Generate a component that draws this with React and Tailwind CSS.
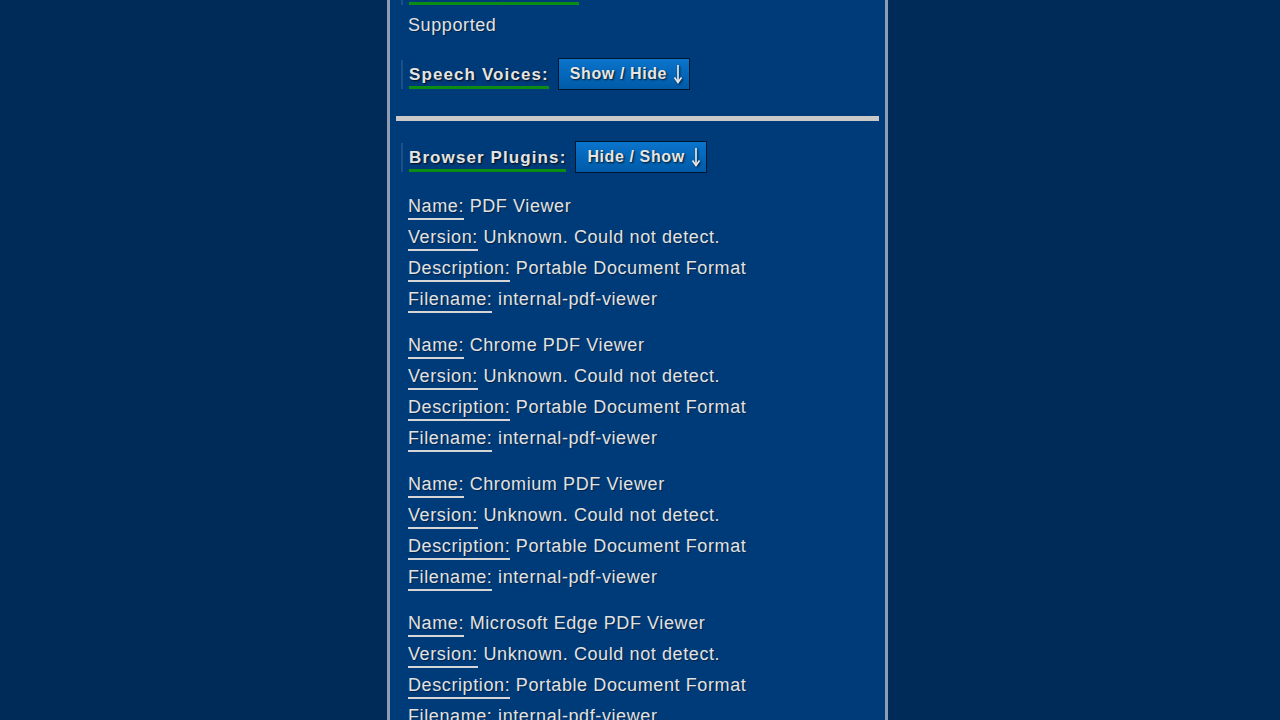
import React from "react";

const plugins = [
  "PDF Viewer",
  "Chrome PDF Viewer",
  "Chromium PDF Viewer",
  "Microsoft Edge PDF Viewer",
  "WebKit built-in PDF",
];

function Arrow() {
  return (
    <svg width="10" height="20" viewBox="0 0 10 20" className="ml-[6px] [filter:drop-shadow(1px_1px_1px_rgba(0,0,0,0.7))]">
      <line x1="5" y1="1" x2="5" y2="18.5" stroke="#e6e6e6" strokeWidth="1.7" />
      <polyline points="1.5,13.5 5,18.5 8.5,13.5" fill="none" stroke="#e6e6e6" strokeWidth="1.7" />
    </svg>
  );
}

function HeadingRow({ title, button, withButton = true }) {
  return (
    <div className="flex items-center gap-[9px] ml-[11px]">
      <div className="border-l-2 border-[#1d5089] pl-[6px] pt-[4px]">
        <span className="block font-bold text-[17px] leading-[22px] tracking-[1.1px] text-[#e4e4e4] border-b-[3px] border-[#0b8c12] [text-shadow:1px_1px_2px_rgba(0,0,0,0.85)]">
          {title}
        </span>
      </div>
      {withButton && (
        <button className="w-[132px] h-[32px] flex items-center justify-start pl-[11px] border border-[#01152c] bg-gradient-to-b from-[#0b74cc] to-[#005ba9] font-bold text-[16px] tracking-[0.6px] text-[#e6e6e6] [text-shadow:1px_1px_2px_rgba(0,0,0,0.85)]">
          <span>{button}</span>
          <Arrow />
        </button>
      )}
    </div>
  );
}

function Field({ label, value }) {
  return (
    <div className="h-[31px] leading-[31px] whitespace-nowrap">
      <span className="inline-block leading-[24px] border-b-2 border-[#d6d6d6]">{label}</span>{" "}
      <span>{value}</span>
    </div>
  );
}

export default function App() {
  return (
    <div className="w-full h-[720px] overflow-hidden bg-[#002a57] [font-family:'Liberation_Sans',Arial,sans-serif]">
      <div className="ml-[387px] w-[501px] h-[720px] border-x-[3px] border-[#8e9cb4] bg-[#003b79] overflow-hidden">
        <div className="-mt-[24px]">
          <HeadingRow title="Speech Synthesis:" withButton={false} />
          <div className="mt-[5px] pl-[18px] text-[18px] tracking-[0.6px] text-[#e2e2e2] [text-shadow:1px_1px_1px_rgba(0,0,0,0.4)]">
            <div className="h-[31px] leading-[31px]">Supported</div>
          </div>
          <div className="mt-[17px]">
            <HeadingRow title="Speech Voices:" button="Show / Hide" />
          </div>
          <div className="mt-[26px] mx-[6px] h-[5px] bg-[#c9c9c9]" />
          <div className="mt-[20px]">
            <HeadingRow title="Browser Plugins:" button="Hide / Show" />
          </div>
          <div className="mt-[18px] pl-[18px] text-[18px] tracking-[0.6px] text-[#e2e2e2] [text-shadow:1px_1px_1px_rgba(0,0,0,0.4)] flex flex-col gap-[15px]">
            {plugins.map((p) => (
              <div key={p}>
                <Field label="Name:" value={p} />
                <Field label="Version:" value="Unknown. Could not detect." />
                <Field label="Description:" value="Portable Document Format" />
                <Field label="Filename:" value="internal-pdf-viewer" />
              </div>
            ))}
          </div>
        </div>
      </div>
    </div>
  );
}
